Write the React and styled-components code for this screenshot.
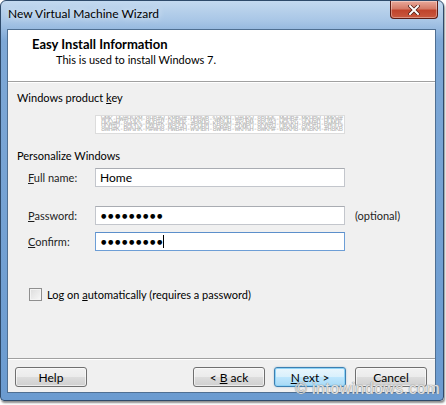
import React from 'react'
import styled, { createGlobalStyle, css } from 'styled-components'

const Global = createGlobalStyle`
  html, body {
    margin: 0;
    padding: 0;
    background: #ffffff;
  }
  body {
    font-family: Lato, "Noto Sans", sans-serif;
    font-size: 11px;
    color: #000;
  }
`

const Page = styled.div`
  width: 446px;
  height: 405px;
  box-sizing: border-box;
`

const Window = styled.div`
  position: relative;
  width: 444px;
  height: 401px;
  box-sizing: border-box;
  border: 1px solid #2e4a6a;
  border-radius: 6px 6px 4px 4px;
  background: linear-gradient(180deg, #c3d9ef 0%, #a8c6e6 20px, #7ea8d6 40px, #6b9bd0 100%);
  box-shadow: 1px 2px 2px rgba(0, 0, 0, 0.45);
  display: flex;
  flex-direction: column;
  overflow: hidden;
`

const TitleBar = styled.div`
  height: 28px;
  display: flex;
  align-items: flex-start;
  padding-left: 7px;
  box-sizing: border-box;
`

const Title = styled.div`
  padding-top: 5px;
  line-height: 16px;
  font-size: 12px;
  color: #000;
  text-shadow: 0 0 6px rgba(255, 255, 255, 0.9);
`

const CloseButton = styled.div`
  margin-left: auto;
  margin-right: 5px;
  width: 48px;
  height: 18px;
  box-sizing: border-box;
  border: 1px solid #5c1c14;
  border-top: none;
  border-radius: 0 0 4px 4px;
  background: linear-gradient(180deg, #e9a99a 0%, #d47b68 45%, #c0442c 55%, #c9593f 100%);
  box-shadow: inset 0 0 0 1px rgba(255, 255, 255, 0.35);
  display: flex;
  align-items: center;
  justify-content: center;
`

const Client = styled.div`
  flex: 1;
  margin: 0 7px 7px 6px;
  border: 1px solid #4f6f92;
  background: #f0f0f0;
  display: flex;
  flex-direction: column;
`

const Header = styled.div`
  height: 52px;
  background: #ffffff;
  border-bottom: 1px solid #a0a0a0;
  box-shadow: 0 1px 0 #ffffff;
  padding: 6px 0 0 24px;
  box-sizing: border-box;
`

const HeaderTitle = styled.div`
  font-weight: bold;
  font-size: 13px;
  line-height: 16px;
`

const HeaderText = styled.div`
  line-height: 16px;
  padding-left: 24px;
`

const Body = styled.div`
  flex: 1;
  padding: 8px 0 0 9px;
  display: flex;
  flex-direction: column;
`

const SectionTitle = styled.div`
  line-height: 16px;
  margin-top: ${p => p.$gap || 0}px;
`

const KeyBox = styled.div`
  margin: 9px 0 0 78px;
  width: 250px;
  height: 19px;
  box-sizing: border-box;
  border: 1px solid #dcdcdc;
  background: #ffffff;
  padding: 1px 5px;
  font-family: "DejaVu Sans Mono", monospace;
  font-size: 7px;
  line-height: 5px;
  letter-spacing: -0.5px;
  color: #b4b4b4;
  overflow: hidden;
  white-space: nowrap;
`

const FieldRow = styled.div`
  display: flex;
  align-items: center;
  margin-top: ${p => p.$gap}px;
  height: 19px;
`

const Label = styled.label`
  width: 67px;
  margin-left: 11px;
  color: #1e1e1e;
`

const Input = styled.div`
  width: 250px;
  height: 19px;
  box-sizing: border-box;
  border: 1px solid #c3c6cc;
  border-top-color: #a9acb2;
  background: #ffffff;
  display: flex;
  align-items: center;
  padding-left: 4px;
  font-size: 12px;
  ${p => p.$focused && css`
    border-color: #6d9ed6;
    border-top-color: #5c8fcb;
  `}
`

const Dots = styled.span`
  font-family: "DejaVu Sans", sans-serif;
  font-size: 6.2px;
  letter-spacing: 1.6px;
  padding-left: 1px;
  color: #000;
`

const Caret = styled.span`
  display: inline-block;
  width: 1px;
  height: 13px;
  background: #000;
  margin-left: -1px;
`

const Hint = styled.span`
  margin-left: 10px;
  color: #1e1e1e;
`

const CheckRow = styled.div`
  display: flex;
  align-items: center;
  margin: 37px 0 0 12px;
  gap: 5px;
`

const CheckBox = styled.span`
  width: 11px;
  height: 11px;
  border: 1px solid #8f8f8f;
  background: linear-gradient(135deg, #dcdcdc, #f8f8f8);
  box-shadow: inset 0 0 0 1px #f4f4f4;
`

const ButtonBar = styled.div`
  height: 34px;
  border-top: 1px solid #a0a0a0;
  box-shadow: inset 0 1px 0 #ffffff;
  display: flex;
  align-items: flex-start;
  padding: 8px 8px 0 7px;
  box-sizing: border-box;
  gap: 9px;
`

const Button = styled.div`
  width: 72px;
  height: 20px;
  box-sizing: border-box;
  border: 1px solid #707070;
  border-radius: 3px;
  background: linear-gradient(180deg, #f2f2f2 0%, #ebebeb 50%, #dddddd 51%, #cfcfcf 100%);
  box-shadow: inset 0 0 0 1px rgba(255, 255, 255, 0.6);
  display: flex;
  align-items: center;
  justify-content: center;
  gap: 3px;
  font-size: 12px;
  color: #000;
  margin-left: ${p => p.$push ? 'auto' : '0'};
  ${p => p.$default && css`
    border-color: #3c7fb1;
    background: linear-gradient(180deg, #eaf6fd 0%, #d9f0fc 50%, #bee6fd 51%, #a7d9f5 100%);
    box-shadow: inset 0 0 0 1px #8ed3f7, 0 0 2px rgba(60, 127, 177, 0.4);
  `}
`

const Watermark = styled.div`
  position: absolute;
  left: 294px;
  top: 379px;
  font-family: "Liberation Sans", Arial, sans-serif;
  font-size: 16px;
  line-height: 18px;
  letter-spacing: 0.4px;
  color: rgba(255, 255, 255, 0.75);
  text-shadow: 0 0 1px #8a8a8a, 0 0 1px #8a8a8a;
  pointer-events: none;
`

const keyLines = [
  'WMK-HW#H%KM-8HB#W-KMBW#-HM8WB-%WKMH-W#HKW-8BHW%-MWHB#-MKHBW-HMKW#',
  'HKW#M-8WHK%-MWH#K-W8MHK-#BMHW-KB8WM-#KWBM-8KW#H-MW%KH-8WM#H-BWMH%',
  '8WH#K-BW%HK-M#WH8-MWB#H-W%MBH-8WM#B-WKM%H-8WKM#-WBKM8-W%BKM-#H8KB'
]

const App = () => (
  <Page>
    <Global />
    <Window>
      <TitleBar>
        <Title>New Virtual Machine Wizard</Title>
        <CloseButton>
          <svg width="12" height="10" viewBox="0 0 12 10">
            <path d="M2 1 L10 9 M10 1 L2 9" stroke="#4a1a12" strokeWidth="3.4" strokeLinecap="square" />
            <path d="M2 1 L10 9 M10 1 L2 9" stroke="#ffffff" strokeWidth="2" strokeLinecap="square" />
          </svg>
        </CloseButton>
      </TitleBar>
      <Client>
        <Header>
          <HeaderTitle>Easy Install Information</HeaderTitle>
          <HeaderText>This is used to install Windows 7.</HeaderText>
        </Header>
        <Body>
          <SectionTitle>Windows product <u>k</u>ey</SectionTitle>
          <KeyBox>
            {keyLines.map((l, i) => <div key={i}>{l}</div>)}
          </KeyBox>
          <SectionTitle $gap={14}>Personalize Windows</SectionTitle>
          <FieldRow $gap={4}>
            <Label><u>F</u>ull name:</Label>
            <Input>Home</Input>
          </FieldRow>
          <FieldRow $gap={19}>
            <Label><u>P</u>assword:</Label>
            <Input><Dots>●●●●●●●●●</Dots></Input>
            <Hint>(optional)</Hint>
          </FieldRow>
          <FieldRow $gap={7}>
            <Label><u>C</u>onfirm:</Label>
            <Input $focused><Dots>●●●●●●●●●</Dots><Caret /></Input>
          </FieldRow>
          <CheckRow>
            <CheckBox />
            <span>Log on <u>a</u>utomatically (requires a password)</span>
          </CheckRow>
        </Body>
        <ButtonBar>
          <Button>Help</Button>
          <Button $push><span>&lt;</span><u>B</u>ack</Button>
          <Button $default><u>N</u>ext<span>&gt;</span></Button>
          <Button>Cancel</Button>
        </ButtonBar>
      </Client>
      <Watermark>© intowindows.com</Watermark>
    </Window>
  </Page>
)

export default App
